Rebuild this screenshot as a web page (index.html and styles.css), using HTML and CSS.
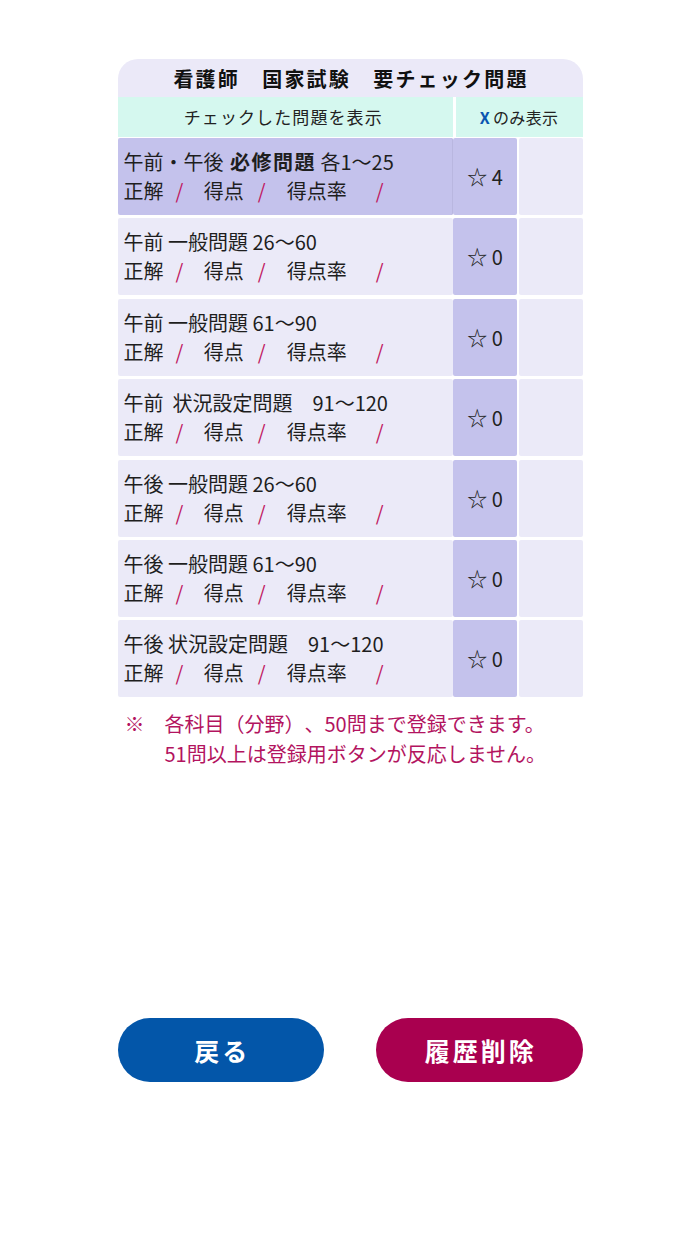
FILE: index.html
```html
<!DOCTYPE html>
<html lang="ja">
<head>
<meta charset="utf-8">
<title>要チェック問題</title>
<link rel="stylesheet" href="styles.css">
</head>
<body>
<div class="wrap">
  <div class="title">看護師　国家試験　要チェック問題</div>
  <div class="sub">
    <div class="sub-l">チェックした問題を表示</div>
    <div class="sub-r"><span class="x">X</span>のみ表示</div>
  </div>
  <div class="rows">
    <div class="row active">
      <div class="main">
        <div class="l1">午前・午後 <b>必修問題</b> 各1〜25</div>
        <div class="l2"><span>正解</span><span class="sl s1">/</span><span class="g1">得点</span><span class="sl s2">/</span><span class="g2">得点率</span><span class="sl s3">/</span></div>
      </div>
      <div class="star">☆ 4</div>
      <div class="empty"></div>
    </div>
    <div class="row">
      <div class="main">
        <div class="l1">午前 一般問題 26〜60</div>
        <div class="l2"><span>正解</span><span class="sl s1">/</span><span class="g1">得点</span><span class="sl s2">/</span><span class="g2">得点率</span><span class="sl s3">/</span></div>
      </div>
      <div class="star">☆ 0</div>
      <div class="empty"></div>
    </div>
    <div class="row">
      <div class="main">
        <div class="l1">午前 一般問題 61〜90</div>
        <div class="l2"><span>正解</span><span class="sl s1">/</span><span class="g1">得点</span><span class="sl s2">/</span><span class="g2">得点率</span><span class="sl s3">/</span></div>
      </div>
      <div class="star">☆ 0</div>
      <div class="empty"></div>
    </div>
    <div class="row">
      <div class="main">
        <div class="l1">午前&nbsp; 状況設定問題　91〜120</div>
        <div class="l2"><span>正解</span><span class="sl s1">/</span><span class="g1">得点</span><span class="sl s2">/</span><span class="g2">得点率</span><span class="sl s3">/</span></div>
      </div>
      <div class="star">☆ 0</div>
      <div class="empty"></div>
    </div>
    <div class="row">
      <div class="main">
        <div class="l1">午後 一般問題 26〜60</div>
        <div class="l2"><span>正解</span><span class="sl s1">/</span><span class="g1">得点</span><span class="sl s2">/</span><span class="g2">得点率</span><span class="sl s3">/</span></div>
      </div>
      <div class="star">☆ 0</div>
      <div class="empty"></div>
    </div>
    <div class="row">
      <div class="main">
        <div class="l1">午後 一般問題 61〜90</div>
        <div class="l2"><span>正解</span><span class="sl s1">/</span><span class="g1">得点</span><span class="sl s2">/</span><span class="g2">得点率</span><span class="sl s3">/</span></div>
      </div>
      <div class="star">☆ 0</div>
      <div class="empty"></div>
    </div>
    <div class="row">
      <div class="main">
        <div class="l1">午後 状況設定問題　91〜120</div>
        <div class="l2"><span>正解</span><span class="sl s1">/</span><span class="g1">得点</span><span class="sl s2">/</span><span class="g2">得点率</span><span class="sl s3">/</span></div>
      </div>
      <div class="star">☆ 0</div>
      <div class="empty"></div>
    </div>
  </div>
  <div class="note">
    <div>※　各科目（分野）、50問まで登録できます。</div>
    <div class="indent">51問以上は登録用ボタンが反応しません。</div>
  </div>
  <div class="buttons">
    <div class="btn back">戻る</div>
    <div class="btn del">履歴削除</div>
  </div>
</div>
</body>
</html>
```
FILE: styles.css
```css
html, body {
  margin: 0;
  padding: 0;
  background: #ffffff;
}
body {
  font-family: "Noto Sans CJK JP", "Noto Sans", sans-serif;
  color: #1e1e1e;
  text-spacing-trim: space-all;
}
.wrap {
  width: 465px;
  margin: 59px auto 0;
}
.title {
  height: 38px;
  background: #ebe9f8;
  border-radius: 20px 20px 0 0;
  display: flex;
  align-items: center;
  justify-content: center;
  font-size: 20px;
  font-weight: bold;
  letter-spacing: 2.2px;
  color: #111;
  padding-left: 2px;
}
.sub {
  display: grid;
  grid-template-columns: 335.5px 1fr;
  column-gap: 2.5px;
  height: 39.5px;
}
.sub-l, .sub-r {
  background: #d5f8ef;
  display: flex;
  align-items: center;
  justify-content: center;
  color: #222;
}
.sub-l {
  font-size: 17px;
  letter-spacing: 1.1px;
  padding-right: 4px;
}
.sub-r {
  font-size: 16px;
  letter-spacing: 0.3px;
}
.x {
  color: #0a55b0;
  font-weight: bold;
  margin-right: 3px;
}
.rows {
  margin-top: 1.5px;
  display: flex;
  flex-direction: column;
  gap: 3.4px;
}
.row {
  display: grid;
  grid-template-columns: 335.5px 64px 1fr;
  height: 77px;
}
.main {
  background: #ebeaf8;
  border-radius: 2px;
  display: flex;
  flex-direction: column;
  justify-content: center;
  padding-left: 6px;
  font-size: 20px;
  line-height: 29px;
  padding-bottom: 1px;
}
.row.active .main {
  background: #c4c2ec;
  box-shadow: inset -1px 0 0 #b9b7e0;
}
.star {
  background: #c4c2ec;
  border-radius: 2px;
  display: flex;
  align-items: center;
  justify-content: center;
  font-size: 20px;
  color: #222;
  white-space: pre;
}
.empty {
  background: #ebeaf8;
  border-radius: 2px;
  margin-left: 1.5px;
}
.l1 {
  white-space: nowrap;
}
.l1 b {
  font-weight: bold;
  letter-spacing: 1.5px;
  margin-left: 2px;
}
.l2 {
  white-space: nowrap;
}
.sl {
  color: #c0185f;
}
.s1 { margin-left: 12px; }
.g1 { margin-left: 20.5px; }
.s2 { margin-left: 14px; }
.g2 { margin-left: 21px; }
.s3 { margin-left: 29px; }
.note {
  margin-top: 12px;
  padding-left: 7px;
  font-size: 20px;
  line-height: 30px;
  color: #b3145f;
}
.indent {
  padding-left: 40px;
}
.buttons {
  margin-top: 249px;
  display: flex;
  justify-content: space-between;
}
.btn {
  width: 206.5px;
  height: 63.5px;
  border-radius: 32px;
  display: flex;
  align-items: center;
  justify-content: center;
  color: #ffffff;
  font-size: 25px;
  font-weight: bold;
  letter-spacing: 3px;
  padding-left: 3px;
  box-sizing: border-box;
}
.back {
  background: #0356a9;
}
.del {
  background: #a9004f;
}
```
